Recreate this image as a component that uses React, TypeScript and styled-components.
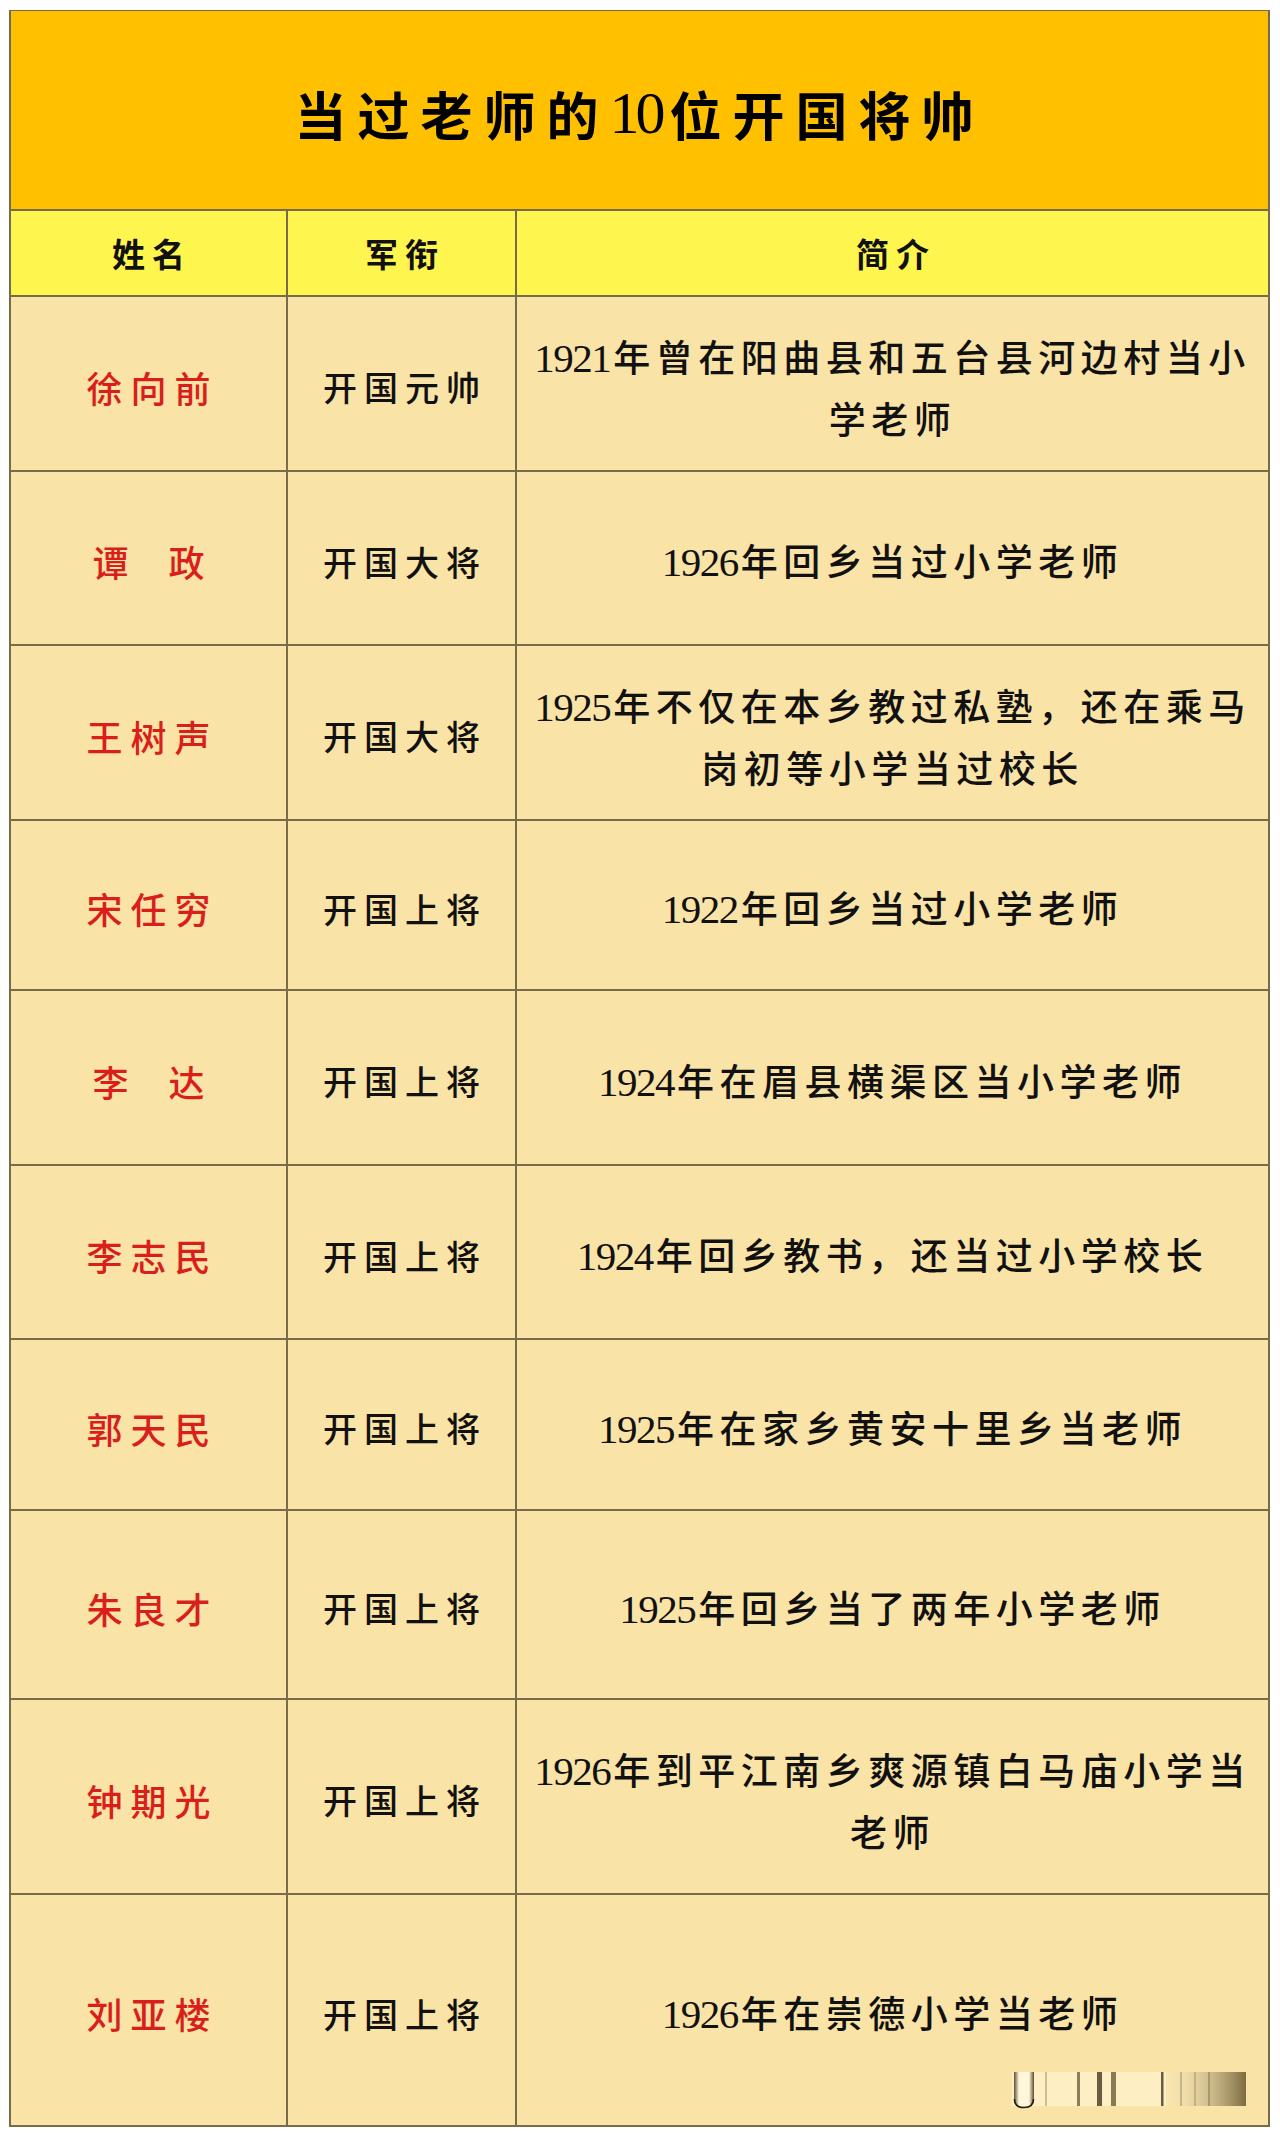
import React from 'react';
import styled, {createGlobalStyle} from "styled-components";

type GeneralType = {
    name: string
    rank: string
    year: string
    intro: string
    height: number
}

const generals: GeneralType[] = [
    {name: '徐向前', rank: '开国元帅', year: '1921', intro: '年曾在阳曲县和五台县河边村当小学老师', height: 175},
    {name: '谭  政', rank: '开国大将', year: '1926', intro: '年回乡当过小学老师', height: 174},
    {name: '王树声', rank: '开国大将', year: '1925', intro: '年不仅在本乡教过私塾，还在乘马岗初等小学当过校长', height: 175},
    {name: '宋任穷', rank: '开国上将', year: '1922', intro: '年回乡当过小学老师', height: 170},
    {name: '李  达', rank: '开国上将', year: '1924', intro: '年在眉县横渠区当小学老师', height: 175},
    {name: '李志民', rank: '开国上将', year: '1924', intro: '年回乡教书，还当过小学校长', height: 174},
    {name: '郭天民', rank: '开国上将', year: '1925', intro: '年在家乡黄安十里乡当老师', height: 171},
    {name: '朱良才', rank: '开国上将', year: '1925', intro: '年回乡当了两年小学老师', height: 189},
    {name: '钟期光', rank: '开国上将', year: '1926', intro: '年到平江南乡爽源镇白马庙小学当老师', height: 195},
    {name: '刘亚楼', rank: '开国上将', year: '1926', intro: '年在崇德小学当老师', height: 232},
]

const Watermark = () => (
    <StyleWatermark>
        <svg width="236" height="40" viewBox="0 0 236 40">
            <defs>
                <linearGradient id="wmFade" x1="0" x2="1" y1="0" y2="0">
                    <stop offset="0" stopColor="#fbeecb" stopOpacity="0.2"/>
                    <stop offset="1" stopColor="#7d6c40"/>
                </linearGradient>
                <linearGradient id="wmU" x1="0" x2="1" y1="0" y2="0">
                    <stop offset="0" stopColor="#5a4d2c"/>
                    <stop offset="0.25" stopColor="#fff6dc"/>
                    <stop offset="0.75" stopColor="#fff6dc"/>
                    <stop offset="1" stopColor="#5a4d2c"/>
                </linearGradient>
            </defs>
            <rect x="0" y="2" width="154" height="34" fill="#fdf2d2" opacity="0.7"/>
            <rect x="154" y="2" width="80" height="34" fill="url(#wmFade)"/>
            <path d="M2 2 L2 29 Q2 38 12 38 Q22 38 22 29 L22 2 Z" fill="url(#wmU)"/>
            <path d="M2.5 29 Q2.5 37.5 12 37.5 Q21.5 37.5 21.5 29" fill="none" stroke="#1f1a10" strokeWidth="1.6"/>
            <rect x="33" y="2" width="2" height="34" fill="#b8aa84" opacity="0.7"/>
            <rect x="65" y="2" width="3" height="34" fill="#6f6141" opacity="0.8"/>
            <rect x="85" y="2" width="5" height="34" fill="#4e4329" opacity="0.85"/>
            <rect x="99" y="2" width="5" height="34" fill="#6a5c3a" opacity="0.8"/>
            <rect x="149" y="2" width="2.5" height="34" fill="#4e4329" opacity="0.85"/>
            <rect x="168" y="2" width="2" height="34" fill="#a8996e" opacity="0.6"/>
            <rect x="182" y="2" width="2" height="34" fill="#a8996e" opacity="0.6"/>
            <rect x="196" y="2" width="2" height="34" fill="#8e7f55" opacity="0.6"/>
        </svg>
    </StyleWatermark>
)

const App = () => {
    return (
        <>
            <GlobalStyle/>
            <StyleSheet>
                <Title>
                    当过老师的<TitleNum>10</TitleNum>位开国将帅
                </Title>
                <HeadRow>
                    <HeadCell>姓名</HeadCell>
                    <HeadCell>军衔</HeadCell>
                    <HeadCell last>简介</HeadCell>
                </HeadRow>
                {generals.map((g, i) => (
                    <BodyRow key={i} h={g.height}>
                        <NameCell>{g.name}</NameCell>
                        <RankCell>{g.rank}</RankCell>
                        <IntroCell>
                            <IntroText><Year>{g.year}</Year>{g.intro}</IntroText>
                            {i === generals.length - 1 && <Watermark/>}
                        </IntroCell>
                    </BodyRow>
                ))}
            </StyleSheet>
        </>
    );
};

export default App;


const GlobalStyle = createGlobalStyle`
    * {
        box-sizing: border-box;
    }
    body {
        margin: 0;
        background: #ffffff;
        font-family: "Noto Sans CJK SC", "Noto Sans", sans-serif;
    }
    `
const LINE = '#776b49'

const StyleSheet = styled.div`
    width: 1261px;
    margin: 10px 0 11px 9px;
    border: 1px solid ${LINE};
    border-left-width: 2px;
    border-right-width: 2px;
    border-bottom: none;
    `
const Title = styled.div`
    height: 200px;
    background: #ffc000;
    border-bottom: 2px solid ${LINE};
    display: flex;
    justify-content: center;
    align-items: center;
    padding-top: 6px;
    font-size: 52px;
    font-weight: 700;
    letter-spacing: 11px;
    color: #000;
    `
const TitleNum = styled.span`
    font-family: "Liberation Serif", serif;
    font-size: 60px;
    font-weight: 400;
    letter-spacing: -4px;
    margin-right: 8px;
    `
const HeadRow = styled.div`
    display: grid;
    grid-template-columns: 277px 229px 1fr;
    height: 86px;
    background: #fff54f;
    border-bottom: 2px solid ${LINE};
    `
const HeadCell = styled.div<{ last?: boolean }>`
    display: flex;
    justify-content: center;
    align-items: center;
    border-right: ${props => props.last ? 'none' : `2px solid ${LINE}`};
    font-size: 33px;
    font-weight: 700;
    letter-spacing: 7px;
    padding-left: 7px;
    color: #111;
    `
const BodyRow = styled.div<{ h: number }>`
    display: grid;
    grid-template-columns: 277px 229px 1fr;
    height: ${props => props.h}px;
    background: #fae3a6;
    border-bottom: 2px solid ${LINE};
    `
const NameCell = styled.div`
    display: flex;
    justify-content: center;
    align-items: center;
    border-right: 2px solid ${LINE};
    white-space: pre;
    font-size: 36px;
    font-weight: 500;
    letter-spacing: 8px;
    padding-left: 8px;
    padding-top: 6px;
    color: #d91f1b;
    `
const RankCell = styled.div`
    display: flex;
    justify-content: center;
    align-items: center;
    border-right: 2px solid ${LINE};
    font-size: 34px;
    font-weight: 500;
    letter-spacing: 7px;
    padding-left: 7px;
    padding-top: 6px;
    color: #111;
    `
const IntroCell = styled.div`
    position: relative;
    display: flex;
    justify-content: center;
    align-items: center;
    padding: 6px 12px 0 12px;
    `
const IntroText = styled.div`
    text-align: center;
    font-size: 37px;
    font-weight: 500;
    line-height: 60px;
    letter-spacing: 5.5px;
    color: #111;
    `
const Year = styled.span`
    font-family: "Liberation Serif", serif;
    font-size: 41px;
    font-weight: 400;
    letter-spacing: -1.5px;
    margin-right: 3px;
    `
const StyleWatermark = styled.div`
    position: absolute;
    right: 20px;
    bottom: 15px;
    line-height: 0;
    `
